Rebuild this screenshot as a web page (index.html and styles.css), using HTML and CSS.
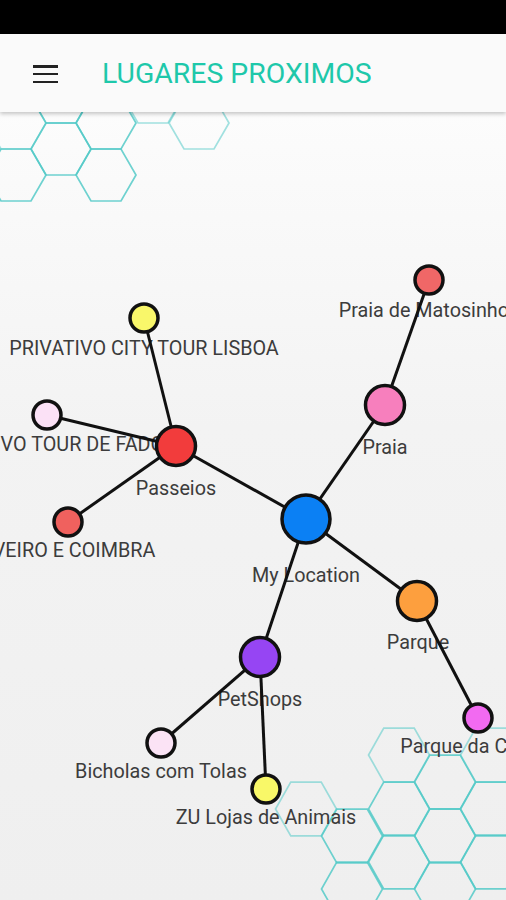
FILE: index.html
```html
<!DOCTYPE html>
<html lang="pt">
<head>
<meta charset="utf-8">
<title>Lugares Proximos</title>
<link rel="stylesheet" href="styles.css">
</head>
<body>
<div class="screen">
  <div class="statusbar"></div>
  <header class="appbar">
    <button class="menu" aria-label="menu">
      <span class="bar"></span><span class="bar"></span><span class="bar"></span>
    </button>
    <h1 class="title">LUGARES PROXIMOS</h1>
  </header>
  <main class="canvas">
    <svg class="graph" width="506" height="788" viewBox="0 112 506 788" xmlns="http://www.w3.org/2000/svg">
      <defs>
        <polygon id="hexA" points="30,0 15,26 -15,26 -30,0 -15,-26 15,-26"/>
        <polygon id="hexB" points="30.5,0 15.25,26.8 -15.25,26.8 -30.5,0 -15.25,-26.8 15.25,-26.8"/>
      </defs>
      <g class="hexes">
        <use href="#hexA" x="16" y="123" class="hx faint"/>
        <use href="#hexA" x="61" y="97" class="hx"/>
        <use href="#hexA" x="106" y="123" class="hx"/>
        <use href="#hexA" x="153" y="97" class="hx faint"/>
        <use href="#hexA" x="199" y="123" class="hx faint"/>
        <use href="#hexA" x="61" y="149" class="hx"/>
        <use href="#hexA" x="16" y="175" class="hx"/>
        <use href="#hexA" x="106" y="175" class="hx"/>

        <use href="#hexB" x="399" y="755" class="hx faint"/>
        <use href="#hexB" x="491" y="755" class="hx faint"/>
        <use href="#hexB" x="445" y="782" class="hx"/>
        <use href="#hexB" x="306" y="809" class="hx faint"/>
        <use href="#hexB" x="399" y="809" class="hx"/>
        <use href="#hexB" x="491" y="809" class="hx"/>
        <use href="#hexB" x="352" y="836" class="hx"/>
        <use href="#hexB" x="445" y="836" class="hx"/>
        <use href="#hexB" x="399" y="862" class="hx"/>
        <use href="#hexB" x="491" y="862" class="hx"/>
        <use href="#hexB" x="352" y="889" class="hx"/>
        <use href="#hexB" x="445" y="889" class="hx"/>
      </g>

      <g class="labels">
        <text x="144" y="355">PRIVATIVO CITY TOUR LISBOA</text>
        <text x="47" y="451">PRIVATIVO TOUR DE FADO</text>
        <text x="68" y="557">AVEIRO E COIMBRA</text>
        <text x="176" y="495">Passeios</text>
        <text x="306" y="582">My Location</text>
        <text x="385" y="454">Praia</text>
        <text x="429" y="317">Praia de Matosinhos</text>
        <text x="418" y="649">Parque</text>
        <text x="478" y="753">Parque da Cidade</text>
        <text x="260" y="706">PetShops</text>
        <text x="161" y="778">Bicholas com Tolas</text>
        <text x="266" y="824">ZU Lojas de Animais</text>
      </g>

      <g class="edges">
        <line x1="306" y1="519" x2="176" y2="446"/>
        <line x1="306" y1="519" x2="385" y2="405"/>
        <line x1="306" y1="519" x2="417" y2="601"/>
        <line x1="306" y1="519" x2="260" y2="657"/>
        <line x1="176" y1="446" x2="144" y2="318"/>
        <line x1="176" y1="446" x2="47" y2="415"/>
        <line x1="176" y1="446" x2="68" y2="522"/>
        <line x1="385" y1="405" x2="429" y2="280"/>
        <line x1="417" y1="601" x2="478" y2="718"/>
        <line x1="260" y1="657" x2="161" y2="743"/>
        <line x1="260" y1="657" x2="266" y2="789"/>
      </g>

      <g class="nodes">
        <circle cx="306" cy="519" r="24" fill="#0b80f4"/>
        <circle cx="176" cy="446" r="19.5" fill="#f23c3c"/>
        <circle cx="144" cy="318" r="14" fill="#f9f76a"/>
        <circle cx="47" cy="415" r="14" fill="#fbe1f6"/>
        <circle cx="68" cy="522" r="14" fill="#f0615e"/>
        <circle cx="385" cy="405" r="19.5" fill="#f77fbd"/>
        <circle cx="429" cy="280" r="14" fill="#f06767"/>
        <circle cx="417" cy="601" r="19.5" fill="#fd9f3e"/>
        <circle cx="478" cy="718" r="14" fill="#f26af1"/>
        <circle cx="260" cy="657" r="19.5" fill="#9645f3"/>
        <circle cx="161" cy="743" r="14" fill="#fbe3f5"/>
        <circle cx="266" cy="789" r="14" fill="#f9f868"/>
      </g>
    </svg>
  </main>
</div>
</body>
</html>
```
FILE: styles.css
```css
* { box-sizing: border-box; }
html, body { margin: 0; padding: 0; }
body {
  width: 506px;
  height: 900px;
  overflow: hidden;
  font-family: Roboto, "Noto Sans", sans-serif;
  background: #f3f3f3;
}
.screen {
  width: 506px;
  height: 900px;
  display: flex;
  flex-direction: column;
}
.statusbar {
  height: 34px;
  background: #000;
  flex: none;
}
.appbar {
  position: relative;
  z-index: 2;
  height: 78px;
  flex: none;
  display: flex;
  align-items: center;
  background: #fafafa;
  box-shadow: 0 2px 4px rgba(0,0,0,0.22);
  padding-left: 33px;
}
.menu {
  width: 25px;
  height: 18px;
  padding: 0;
  border: 0;
  background: none;
  display: flex;
  flex-direction: column;
  justify-content: space-between;
  margin-top: 2px;
}
.menu .bar {
  display: block;
  height: 2.5px;
  width: 25px;
  background: #222;
}
.title {
  margin: 2px 0 0 44px;
  font-family: Roboto, sans-serif;
  font-weight: 400;
  font-size: 28.4px;
  letter-spacing: 0;
  color: #1ec8aa;
  line-height: 1;
}
.canvas {
  flex: 1;
  overflow: hidden;
  background: linear-gradient(#fcfcfc 0%, #f3f3f3 40%, #efefef 100%);
}
.graph { display: block; }
.hx {
  fill: none;
  stroke: #55cac8;
  stroke-width: 1.7;
  opacity: 0.85;
}
.hx.faint { opacity: 0.55; }
.labels text {
  font-family: Roboto, sans-serif;
  font-size: 19.8px;
  fill: #3c3c3c;
  text-anchor: middle;
}
.edges line {
  stroke: #111;
  stroke-width: 3;
}
.nodes circle {
  stroke: #111;
  stroke-width: 3.5;
}
```
